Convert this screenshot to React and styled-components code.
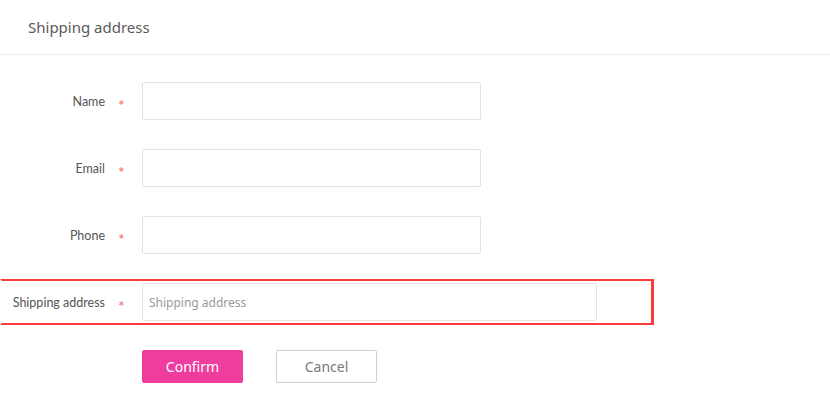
import styled, { createGlobalStyle } from "styled-components";

const GlobalStyle = createGlobalStyle`
    body {
        margin: 0;
        background: #fff;
        font-family: Lato, "Noto Sans", sans-serif;
    }
`;

const Page = styled.div`
    width: 830px;
    height: 405px;
    overflow: hidden;
    background: #fff;
`;
const Header = styled.div`
    height: 55px;
    box-sizing: border-box;
    padding: 0 0 0 28px;
    border-bottom: 1px solid #ececec;
    display: flex;
    align-items: center;
    font-family: "Noto Sans", sans-serif;
    font-size: 15px;
    color: #5a5a5a;
`;
const Form = styled.div`
    padding: 23px 0 0 0;
`;
const Row = styled.div`
    width: 654px;
    box-sizing: border-box;
    border: 2px solid ${(p) => (p.highlight ? "#fa3c3f" : "transparent")};
    border-right-width: 3px;
    border-left-color: transparent;
    padding: 2px 0;
    margin: 0 0 21px 0;
    display: flex;
    align-items: center;
`;
const Label = styled.div`
    width: 103px;
    text-align: right;
    font-size: 12.5px;
    color: #555;
`;
const Star = styled.div`
    width: 37px;
    box-sizing: border-box;
    padding: 8px 0 0 13px;
    font-size: 16px;
    line-height: 16px;
    color: #f45f68;
`;
const Input = styled.input`
    width: ${(p) => p.w}px;
    height: 38px;
    box-sizing: border-box;
    border: 1px solid #e3e3e3;
    border-radius: 2px;
    padding: 0 6px;
    font-family: "Noto Sans", sans-serif;
    font-size: 12px;
    color: #333;
    outline: none;
    &::placeholder {
        color: #9a9a9a;
    }
`;
const Buttons = styled.div`
    display: flex;
    gap: 33px;
    padding: 4px 0 0 142px;
`;
const Button = styled.div`
    width: 101px;
    height: 33px;
    box-sizing: border-box;
    border-radius: 2px;
    display: flex;
    align-items: center;
    justify-content: center;
    font-family: "Noto Sans", sans-serif;
    font-size: 14px;
    background: ${(p) => (p.primary ? "#ef3c9f" : "#fff")};
    color: ${(p) => (p.primary ? "#fff" : "#7a7a7a")};
    border: 1px solid ${(p) => (p.primary ? "#ef3c9f" : "#cfcfcf")};
`;

const fields = [
    { label: "Name", w: 339 },
    { label: "Email", w: 339 },
    { label: "Phone", w: 339 },
    { label: "Shipping address", w: 455, placeholder: "Shipping address", highlight: true },
];

export default () => {
    return (
        <Page>
            <GlobalStyle />
            <Header>Shipping address</Header>
            <Form>
                {fields.map((f) => (
                    <Row key={f.label} highlight={f.highlight}>
                        <Label>{f.label}</Label>
                        <Star>*</Star>
                        <Input w={f.w} placeholder={f.placeholder} />
                    </Row>
                ))}
                <Buttons>
                    <Button primary>Confirm</Button>
                    <Button>Cancel</Button>
                </Buttons>
            </Form>
        </Page>
    );
};
